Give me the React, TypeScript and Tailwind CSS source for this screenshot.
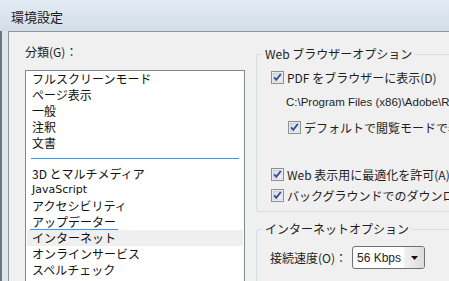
import React from 'react';

const jp = { fontFamily: '"Noto Sans CJK JP", "Noto Sans", sans-serif' };
const latin = { fontFamily: '"Liberation Sans", "Noto Sans CJK JP", sans-serif' };

const CheckBox = () => (
    <svg width="13" height="13" viewBox="0 0 13 13" className="shrink-0">
        <defs>
            <linearGradient id="cbg" x1="0" y1="0" x2="1" y2="1">
                <stop offset="0" stopColor="#d4d8de" />
                <stop offset="1" stopColor="#f7f8fa" />
            </linearGradient>
        </defs>
        <rect x="0.5" y="0.5" width="12" height="12" fill="#fff" stroke="#8f8f8f" />
        <rect x="2" y="2" width="9" height="9" fill="url(#cbg)" stroke="#b5bac3" strokeWidth="0.6" />
        <path d="M3.2 6.4 L5.3 8.9 L9.8 3" fill="none" stroke="#2e4a9e" strokeWidth="1.8" />
    </svg>
);

const listTop = ['フルスクリーンモード', 'ページ表示', '一般', '注釈', '文書'];

const Row = ({ children, active }: { children: React.ReactNode; active?: boolean }) => (
    <div className={`h-[16px] flex items-center pl-[5px] mx-[1px] ${active ? 'bg-[#efefef]' : ''}`}>
        {children}
    </div>
);

const GroupBox = ({ title, children, className }: { title: string; children: React.ReactNode; className?: string }) => (
    <div className={`relative border border-[#d5dfe5] rounded-[3px] border-r-0 rounded-r-none ${className ?? ''}`}>
        <span className="absolute left-[6px] top-[-9px] px-[2px] bg-[#f0f0f0] text-[12px] leading-[16px] text-[#1e1e1e]" style={jp}>
            {title}
        </span>
        {children}
    </div>
);

export default function App() {
    return (
        <div className="w-[449px] h-[281px] overflow-hidden bg-[#dbe4ee] flex flex-col text-black">
            <div className="h-[31px] shrink-0 flex items-center pl-[11px] pt-[2px] text-[13px] text-[#1a1a1a] bg-gradient-to-b from-[#e3eaf2] to-[#d3dee9]" style={jp}>
                環境設定
            </div>
            <div className="flex-1 flex min-h-0">
                <div className="w-[8px] shrink-0 border-l-2 border-[#6d737a] bg-[#dde5ee]" />
                <div className="flex-1 flex border-l border-t border-[#8e969f] bg-[#f0f0f0] min-w-0">
                    {/* category list */}
                    <div className="w-[236px] shrink-0 pl-[16px] pt-[13px] flex flex-col">
                        <div className="text-[12px] leading-[14px] text-[#1e1e1e] h-[25px]" style={jp}>
                            分類(G)：
                        </div>
                        <div className="flex-1 border border-[#828790] border-b-0 bg-white text-[12px] leading-[16px] text-[#111]" style={jp}>
                            {listTop.map((t) => (
                                <Row key={t}>{t}</Row>
                            ))}
                            <div className="h-[15px] flex items-center px-[5px]">
                                <div className="h-px w-full bg-[#3399ff]" />
                            </div>
                            <Row>3D とマルチメディア</Row>
                            <Row>
                                <span className="text-[11px]" style={{ fontFamily: '"DejaVu Sans", sans-serif' }}>JavaScript</span>
                            </Row>
                            <Row>アクセシビリティ</Row>
                            <div className="h-[16px] flex items-center pl-[3px] mx-[1px]">
                                <span className="border-b border-[#3399ff] pl-[2px] pr-[2px] leading-[15px]">アップデーター</span>
                            </div>
                            <Row active>インターネット</Row>
                            <Row>オンラインサービス</Row>
                            <Row>スペルチェック</Row>
                        </div>
                    </div>

                    {/* options */}
                    <div className="flex-1 pl-[11px] pt-[22px] flex flex-col min-w-0">
                        <GroupBox title="Web ブラウザーオプション" className="h-[158px] shrink-0">
                            <div className="pl-[14px] pt-[16px] text-[12px] text-[#1e1e1e] whitespace-nowrap" style={jp}>
                                <div className="h-[13px] flex items-center gap-[3px]">
                                    <CheckBox />
                                    <span>PDF をブラウザーに表示(D)</span>
                                </div>
                                <div className="h-[13px] mt-[12px] pl-[15px] flex items-center text-[11.5px]" style={latin}>
                                    C:\Program Files (x86)\Adobe\Reader 11.0\Reader\AcroRd32.exe
                                </div>
                                <div className="h-[13px] mt-[12px] pl-[17px] flex items-center gap-[3px]">
                                    <CheckBox />
                                    <span>デフォルトで閲覧モードで表示</span>
                                </div>
                                <div className="h-[13px] mt-[34px] flex items-center gap-[3px]">
                                    <CheckBox />
                                    <span>Web 表示用に最適化を許可(A)</span>
                                </div>
                                <div className="h-[13px] mt-[8px] flex items-center gap-[3px]">
                                    <CheckBox />
                                    <span>バックグラウンドでのダウンロードを許可</span>
                                </div>
                            </div>
                        </GroupBox>
                        <GroupBox title="インターネットオプション" className="mt-[17px] flex-1 border-b-0 rounded-b-none">
                            <div className="pl-[13px] pt-[16px] flex items-center text-[12px] text-[#1e1e1e] whitespace-nowrap" style={jp}>
                                <span className="w-[82px] shrink-0">接続速度(O)：</span>
                                <div className="w-[73px] h-[23px] shrink-0 border border-[#707070] rounded-[3px] flex overflow-hidden bg-white">
                                    <div className="flex-1 flex items-center pl-[4px] text-[12px] whitespace-nowrap" style={latin}>
                                        56 Kbps
                                    </div>
                                    <div className="w-[20px] flex items-center justify-center bg-gradient-to-r from-[#f2f2f2] to-[#dcdcdc]">
                                        <svg width="7" height="4" viewBox="0 0 7 4">
                                            <path d="M0 0 H7 L3.5 4 Z" fill="#111" />
                                        </svg>
                                    </div>
                                </div>
                            </div>
                        </GroupBox>
                    </div>
                </div>
            </div>
        </div>
    );
}
